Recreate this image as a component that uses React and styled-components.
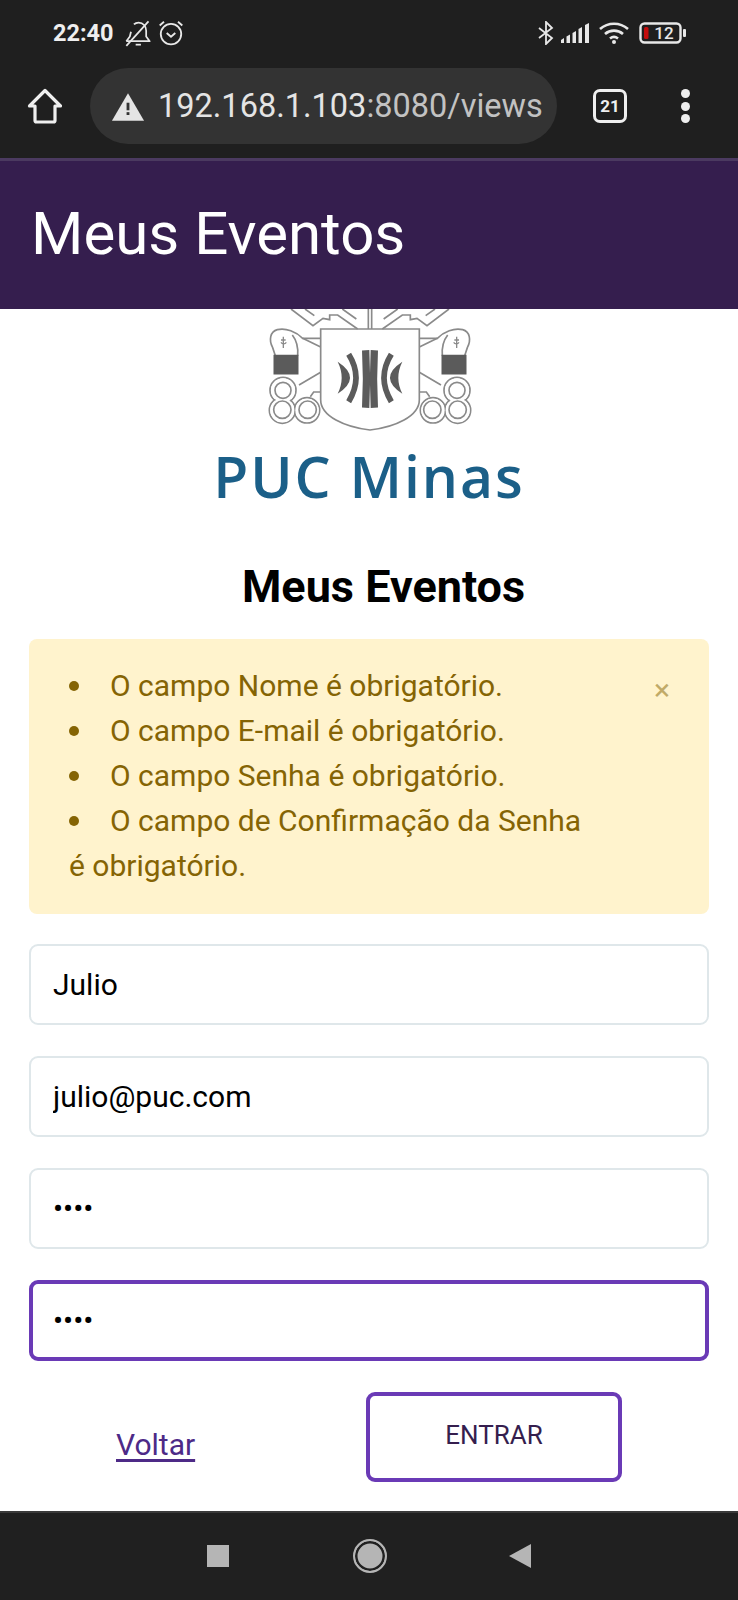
import styled, { createGlobalStyle } from "styled-components"

const Global = createGlobalStyle`
  * { box-sizing: border-box; }
  body { margin: 0; background: #fff; font-family: Roboto, "Liberation Sans", sans-serif; }
`

const Page = styled.div`
  width: 738px;
  height: 1600px;
  display: flex;
  flex-direction: column;
  overflow: hidden;
`

const StatusBar = styled.div`
  height: 68px;
  background: #1f1f1f;
  display: flex;
  align-items: center;
  justify-content: space-between;
  padding: 0 52px 2px 53px;
  color: #efefef;
`

const StatusGroup = styled.div`
  display: flex;
  align-items: center;
  gap: ${(p) => p.$gap || 10}px;
`

const Glyph = styled.svg`
  display: block;
  margin-right: ${(p) => p.$pull || 0}px;
`

const Time = styled.span`
  font-size: 23.5px;
  font-weight: 700;
  margin-right: 1px;
`

const Toolbar = styled.div`
  height: 90px;
  background: #1f1f1f;
  display: flex;
  align-items: flex-start;
  padding: 0 0 0 26px;
`

const ToolIcon = styled.div`
  width: 38px;
  height: 76px;
  display: flex;
  align-items: center;
  justify-content: center;
`

const UrlPill = styled.div`
  width: 467px;
  height: 76px;
  margin: 0 36px 0 26px;
  padding: 0 14px 0 21px;
  border-radius: 38px;
  background: #333333;
  display: flex;
  align-items: center;
  gap: 13px;
  overflow: hidden;
`

const UrlText = styled.span`
  font-size: 32.5px;
  color: #c2c2c2;
  white-space: nowrap;
  flex: 1;
  min-width: 0;
`

const UrlHost = styled.span`
  color: #e4e4e4;
`

const TabCount = styled.div`
  width: 34px;
  height: 34px;
  border: 3px solid #efefef;
  border-radius: 7px;
  color: #efefef;
  font-size: 17px;
  font-weight: 700;
  display: flex;
  align-items: center;
  justify-content: center;
  margin-top: 21px;
`

const MenuDots = styled.div`
  margin: 21px 0 0 54px;
  height: 34px;
  display: flex;
  flex-direction: column;
  justify-content: space-between;
`

const Dot = styled.span`
  width: 9px;
  height: 9px;
  border-radius: 50%;
  background: #efefef;
`

const AppBar = styled.header`
  height: 151px;
  background: #351e4e;
  border-top: 3px solid #4b3a60;
  display: flex;
  align-items: center;
  padding: 0 31px 3px;
  color: #fff;
  font-size: 60px;
`

const Content = styled.main`
  flex: 1;
  background: #fff;
  padding: 0 29px;
  display: flex;
  flex-direction: column;
`

const Logo = styled.div`
  height: 197px;
  display: flex;
  flex-direction: column;
  align-items: center;
`

const Crest = styled.svg`
  display: block;
  width: 230px;
  height: 123px;
  margin-left: 2px;
  flex: none;
`

const LogoWord = styled.div`
  font-family: "Open Sans", sans-serif;
  font-weight: 600;
  font-size: 57px;
  line-height: 70px;
  color: #1b5f88;
  letter-spacing: 2px;
  margin: 9px 0 0 0;
`

const Title = styled.h1`
  margin: 50px 0 0;
  font-size: 45px;
  line-height: 62px;
  font-weight: 700;
  text-align: center;
  color: #000;
  padding-left: 29px;
`

const Alert = styled.div`
  position: relative;
  margin-top: 21px;
  height: 275px;
  border-radius: 8px;
  background: #fff3cd;
  color: #856404;
  font-size: 30px;
  line-height: 45px;
  padding: 24px 120px 0 40px;
`

const ErrorList = styled.ul`
  list-style: none;
  margin: 0;
  padding: 0;
`

const ErrorItem = styled.li`
  &::before {
    content: "";
    display: inline-block;
    width: 10px;
    height: 10px;
    border-radius: 50%;
    background: #856404;
    margin: 0 31px 5px 0;
    vertical-align: middle;
  }
`

const Close = styled.span`
  position: absolute;
  top: 30px;
  right: 39px;
  font-size: 30px;
  line-height: 42px;
  color: #856404;
  opacity: 0.5;
`

const Form = styled.form`
  display: flex;
  flex-direction: column;
  gap: 31px;
  margin-top: 30px;
`

const Input = styled.input`
  width: 100%;
  height: 81px;
  padding: 0 22px;
  font: 30px Roboto, sans-serif;
  color: #000;
  background: #fff;
  outline: none;
  border-radius: 9px;
  border: ${(p) => (p.$focused ? "4px solid #6a3ab6" : "2px solid #dfe7ea")};
  padding-left: ${(p) => (p.$focused ? 20 : 22)}px;
`

const Actions = styled.div`
  display: flex;
  align-items: flex-start;
  margin-top: 31px;
`

const BackLink = styled.a`
  width: 337px;
  padding: 33px 0 0 87px;
  color: #4d2a87;
  font-size: 30px;
  line-height: 40px;
  text-decoration: underline;
  text-decoration-thickness: 2.5px;
  text-underline-offset: 4px;
`

const SubmitButton = styled.button`
  width: 256px;
  height: 90px;
  padding: 0 0 4px;
  background: #fff;
  border: 4px solid #6a3ab6;
  border-radius: 9px;
  color: #351e4e;
  font: 26px Roboto, sans-serif;
`

const NavBar = styled.nav`
  height: 89px;
  background: #202020;
  border-top: 2px solid #3a3a3a;
  display: flex;
  align-items: center;
  justify-content: center;
  padding: 0 0 2px 0;
  gap: 124px;
`

const NavSquare = styled.span`
  width: 22px;
  height: 22px;
  background: #b5b5b5;
`

const NavCircle = styled.span`
  width: 34px;
  height: 34px;
  border-radius: 50%;
  background: #b5b5b5;
  border: 2.5px solid #b5b5b5;
  box-shadow: inset 0 0 0 2.5px #202020;
`

const NavBack = styled.span`
  width: 0;
  height: 0;
  margin-left: -2px;
  border-top: 12px solid transparent;
  border-bottom: 12px solid transparent;
  border-right: 22px solid #b5b5b5;
`

const BellOff = () => (
  <Glyph $pull={-3} width="28" height="28" viewBox="0 0 24 24" fill="none" stroke="#e8e8e8" strokeWidth="1.5" strokeLinejoin="round">
    <path d="M2 19h20l-3-4V10c0-3.500-2.500-7-6.500-7-1.500 0-3 .6-4 1.600" />
    <path d="M6 11l-1 4-3 4" />
    <path d="M10 22h4.500" />
    <path d="M2 23L21 2" />
  </Glyph>
)

const Alarm = () => (
  <Glyph width="26" height="28" viewBox="0 0 24 26" fill="none" stroke="#e8e8e8" strokeWidth="1.7">
    <circle cx="12" cy="14" r="9.500" />
    <path d="M8 13l4 3.500 4-3.500" />
    <path d="M1.500 6l4-3.500M22.500 6l-4-3.500" />
  </Glyph>
)

const Bluetooth = () => (
  <Glyph $pull={-3} width="16" height="24" viewBox="0 0 16 24" fill="none" stroke="#e8e8e8" strokeWidth="1.8">
    <path d="M1 7l13 10-6 6V1l6 6L1 17" />
  </Glyph>
)

const Signal = () => (
  <Glyph width="28" height="20" viewBox="0 0 28 20" fill="#e8e8e8">
    <path d="M0 17l3-2v5H0zM5.500 13.500l3.500-2V20H5.500zM11.500 10l3.500-2v12h-3.500zM17.500 6l3.500-2v16h-3.500zM24 2l4-2v20h-4z" />
  </Glyph>
)

const Wifi = () => (
  <Glyph width="30" height="22" viewBox="0 0 30 22" fill="none" stroke="#e8e8e8" strokeWidth="2.600">
    <path d="M1 7c8-7 20-7 28 0" />
    <path d="M6 12c5-4.500 13-4.500 18 0" />
    <path d="M11 16.500c2.500-2 5.500-2 8 0" />
    <circle cx="15" cy="20" r="2" fill="#e8e8e8" stroke="none" />
  </Glyph>
)

const Battery = () => (
  <Glyph width="47" height="22" viewBox="0 0 47 22">
    <rect x="1.500" y="1.500" width="40" height="19" rx="4" fill="none" stroke="#e8e8e8" strokeWidth="2.400" />
    <rect x="5" y="5" width="4.500" height="12" rx="1.500" fill="#c40c0c" />
    <rect x="44" y="7" width="3" height="8" rx="1" fill="#e8e8e8" />
    <text x="25" y="17" textAnchor="middle" fontFamily="Roboto, sans-serif" fontSize="17" fontWeight="500" fill="#e8e8e8">12</text>
  </Glyph>
)

const Home = () => (
  <svg width="36" height="36" viewBox="0 0 36 36" fill="none" stroke="#efefef" strokeWidth="3.200" strokeLinejoin="round">
    <path d="M18 2.500L2.500 18h5.500v14.500c0 1 .5 1.500 1.500 1.500h17c1 0 1.500-.5 1.500-1.500V18h5.500z" />
  </svg>
)

const Warning = () => (
  <svg width="34" height="29" viewBox="0 0 36 30">
    <path d="M18 1L35 30H1z" fill="#e4e4e4" />
    <rect x="16.500" y="11" width="3" height="8" fill="#333" />
    <rect x="16.500" y="21" width="3" height="3" fill="#333" />
  </svg>
)

// left half of the crest, the right half is the same thing mirrored
const CrestHalf = () => (
  <g>
    <path d="M108 12l66 50 30-22 20 4v-14h24l60 42" />
    <path d="M150 12l28 20M262 12l42 30" />
    <path d="M340 12v60" />
    <path d="M197 100h-54c-20-20-50-32-76-26-22 6-26 32-14 54l8 24" />
    <path d="M128 152c2-24-2-44-16-62" />
    <path d="M143 100l54 26" />
    <path d="M78 105l14 0M85 95v34M78 112c4 6 12 6 16 0" strokeWidth="4" />
    <path d="M58 152h70v54H58z" fill="#5b5b5b" stroke="#5b5b5b" />
    <circle cx="84" cy="256" r="39" />
    <circle cx="82" cy="316" r="39" />
    <circle cx="156" cy="316" r="38" />
    <circle cx="84" cy="256" r="36" fill="#fff" stroke="none" />
    <circle cx="82" cy="316" r="36" fill="#fff" stroke="none" />
    <circle cx="156" cy="316" r="35" fill="#fff" stroke="none" />
    <circle cx="84" cy="256" r="24" />
    <circle cx="82" cy="314" r="26" />
    <circle cx="158" cy="314" r="26" />
    <path d="M132 240l65-38M166 275l10-14 21 0" />
    <g stroke="#5b5b5b" fill="none">
      <path d="M332 136q5 86 0 172" strokeWidth="22" />
      <path d="M281 148q44 70 0 142" strokeWidth="17" />
    </g>
    <path d="M248 170Q322 218 248 266Q272 218 248 170z" fill="#5b5b5b" stroke="none" />
  </g>
)

const CrestMark = () => (
  <Crest viewBox="0 12 690 369" fill="none" stroke="#8a8a8a" strokeWidth="5">
    <CrestHalf />
    <g transform="translate(690 0) scale(-1 1)">
      <CrestHalf />
    </g>
    <path d="M197 72h296v212c0 50-73 82-148 91-75-9-148-41-148-91z" />
  </Crest>
)

const App = () => {
  return (
    <Page>
      <Global />
      <StatusBar>
        <StatusGroup $gap={9}>
          <Time>22:40</Time>
          <BellOff />
          <Alarm />
        </StatusGroup>
        <StatusGroup $gap={10}>
          <Bluetooth />
          <Signal />
          <Wifi />
          <Battery />
        </StatusGroup>
      </StatusBar>
      <Toolbar>
        <ToolIcon><Home /></ToolIcon>
        <UrlPill>
          <Warning />
          <UrlText><UrlHost>192.168.1.103</UrlHost>:8080/views</UrlText>
        </UrlPill>
        <TabCount>21</TabCount>
        <MenuDots>
          <Dot />
          <Dot />
          <Dot />
        </MenuDots>
      </Toolbar>
      <AppBar>Meus Eventos</AppBar>
      <Content>
        <Logo>
          <CrestMark />
          <LogoWord>PUC Minas</LogoWord>
        </Logo>
        <Title>Meus Eventos</Title>
        <Alert>
          <ErrorList>
            <ErrorItem>O campo Nome é obrigatório.</ErrorItem>
            <ErrorItem>O campo E-mail é obrigatório.</ErrorItem>
            <ErrorItem>O campo Senha é obrigatório.</ErrorItem>
            <ErrorItem>O campo de Confirmação da Senha é obrigatório.</ErrorItem>
          </ErrorList>
          <Close>×</Close>
        </Alert>
        <Form>
          <Input type="text" defaultValue="Julio" />
          <Input type="email" defaultValue="julio@puc.com" />
          <Input type="password" defaultValue="1234" />
          <Input type="password" defaultValue="1234" $focused />
        </Form>
        <Actions>
          <BackLink>Voltar</BackLink>
          <SubmitButton type="button">ENTRAR</SubmitButton>
        </Actions>
      </Content>
      <NavBar>
        <NavSquare />
        <NavCircle />
        <NavBack />
      </NavBar>
    </Page>
  )
}

export default App
